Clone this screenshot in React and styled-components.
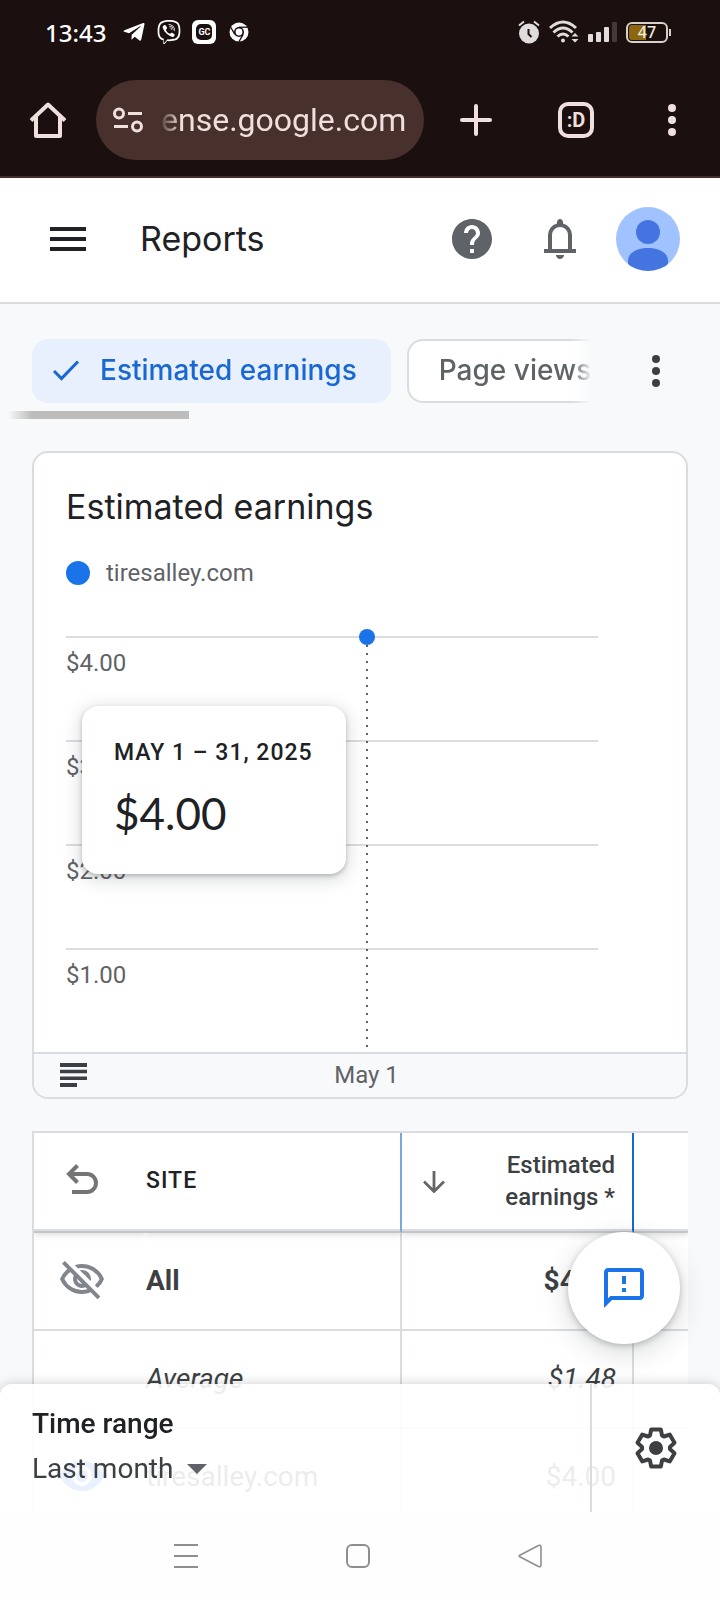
import React from 'react'
import styled, { createGlobalStyle } from 'styled-components'
import { FaTelegramPlane, FaViber } from 'react-icons/fa'
import {
    MdHelp,
    MdMenu,
    MdOutlineFeedback,
    MdOutlineVisibilityOff,
    MdVisibility,
} from 'react-icons/md'

const gridLabels = ['$4.00', '$3.00', '$2.00', '$1.00']

const GlobalStyle = createGlobalStyle`
  * {
    box-sizing: border-box;
  }
  body {
    margin: 0;
    background: #f8f9fb;
    color: #3c4043;
    font-family: Roboto, "Liberation Sans", sans-serif;
  }
  button, input, select {
    font: inherit;
    color: inherit;
    background: none;
    border: 0;
    padding: 0;
    margin: 0;
  }
  h1, h2, p {
    margin: 0;
    font-weight: 400;
  }
  svg {
    display: block;
    flex: none;
  }
`

/* ---------- phone status bar ---------- */

const ChromeMark = () => (
    <svg width="20" height="20" viewBox="0 0 20 20">
        <circle cx="10" cy="10" r="9.5" fill="#fff" />
        <circle cx="10" cy="10" r="5" fill="#1b100f" />
        <circle cx="10" cy="10" r="3.4" fill="#fff" />
        {[0, 120, 240].map((a) => (
            <path key={a} d="M10 5.2H18.6" stroke="#1b100f" strokeWidth="1.3" transform={`rotate(${a} 10 10)`} />
        ))}
    </svg>
)

const Alarm = () => (
    <svg width="22" height="24" viewBox="0 0 22 24">
        <circle cx="11" cy="13.5" r="10" fill="#e0dcdc" />
        <path d="M1 5.5 6 1.5M21 5.5 16 1.5" stroke="#e0dcdc" strokeWidth="2" />
        <path d="M10.5 9v5l3 3" stroke="#1b100f" strokeWidth="2" fill="none" />
    </svg>
)

const Wifi = () => (
    <svg width="30" height="24" viewBox="0 0 30 24" fill="none" stroke="#e0dcdc" strokeWidth="3">
        <path d="M1 8Q14 -4 27 8" />
        <path d="M4.5 12.5Q14 3.5 23.5 12.5" />
        <path d="M8.5 16.5Q14 11.5 19.5 16.5" />
        <circle cx="14" cy="20.5" r="2" fill="#e0dcdc" stroke="none" />
        <path d="M22.5 16.5 26 13l3.500 3.500zM22.500 19 26 22.500 29.500 19z" fill="#e0dcdc" stroke="none" />
    </svg>
)

const Signal = () => (
    <svg width="29" height="20" viewBox="0 0 29 20" fill="#e0dcdc">
        <rect x="0" y="12" width="5" height="8" rx="1" />
        <rect x="8" y="10" width="5" height="10" rx="1" />
        <rect x="16" y="5" width="5" height="15" rx="1" />
        <rect x="24" y="0" width="5" height="20" rx="1" fill="#45393a" />
    </svg>
)

const StatusBar = () => (
    <StatusRow>
        <Clock>13:43</Clock>
        <AppIcons>
            <FaTelegramPlane size={24} />
            <FaViber size={24} />
            <GcBadge><span>GC</span></GcBadge>
            <ChromeMark />
        </AppIcons>
        <SystemIcons>
            <Alarm />
            <Wifi />
            <Signal />
            <Battery><span>47</span></Battery>
        </SystemIcons>
    </StatusRow>
)

const StatusRow = styled.div`
  display: flex;
  align-items: center;
  height: 64px;
  padding: 0 52px 0 45px;
  color: #fff;
`

const Clock = styled.time`
  font-family: "Noto Sans", sans-serif;
  font-size: 24px;
  font-weight: 500;
`

const AppIcons = styled.div`
  display: flex;
  align-items: center;
  gap: 11px;
  margin-left: 16px;
  svg:last-child {
    margin-left: 2px;
  }
`

const GcBadge = styled.div`
  width: 24px;
  height: 24px;
  padding: 4px;
  border-radius: 6px;
  background: #fff;
  span {
    display: grid;
    place-items: center;
    height: 16px;
    border-radius: 5px;
    background: #1b100f;
    font-size: 9px;
    font-weight: 700;
  }
`

const SystemIcons = styled.div`
  display: flex;
  align-items: center;
  gap: 9px;
  margin-left: auto;
`

const Battery = styled.div`
  position: relative;
  width: 42px;
  height: 21px;
  border: 2px solid #d8d2c8;
  border-radius: 6px;
  background: linear-gradient(90deg, #8d670f 48%, transparent 48%) content-box;
  padding: 1px;
  span {
    display: block;
    text-align: center;
    font-family: "Noto Sans", sans-serif;
    font-size: 16px;
    line-height: 15px;
    font-weight: 500;
    color: #efe8dc;
  }
  &::after {
    content: '';
    position: absolute;
    right: -5px;
    top: 5px;
    width: 2px;
    height: 7px;
    background: #d8d2c8;
  }
`

/* ---------- browser toolbar ---------- */

const Kebab = () => (
    <svg width="8" height="32" viewBox="0 0 8 32" fill="currentColor">
        <circle cx="4" cy="4" r="4" />
        <circle cx="4" cy="16" r="4" />
        <circle cx="4" cy="28" r="4" />
    </svg>
)

const BrowserBar = () => (
    <Browser>
        <StatusBar />
        <Toolbar>
            <ToolButton aria-label="Home">
                <svg width="40" height="40" viewBox="0 0 40 40" fill="none" stroke="currentColor" strokeWidth="4" strokeLinejoin="round">
                    <path d="M3 20.500 20 4.500 37 20.500M8 17V36H32V17" />
                </svg>
            </ToolButton>
            <AddressPill>
                <svg width="32" height="28" viewBox="0 0 32 28" fill="none" stroke="currentColor" strokeWidth="3">
                    <circle cx="7" cy="7.500" r="4.500" />
                    <path d="M16 7.500H30M2 20.500H16" />
                    <circle cx="25" cy="20.500" r="4.500" />
                </svg>
                <input type="text" aria-label="Address" defaultValue="ense.google.com" />
            </AddressPill>
            <ToolButton aria-label="New tab" $wide>
                <svg width="32" height="32" viewBox="0 0 32 32" stroke="currentColor" strokeWidth="4" strokeLinecap="round">
                    <path d="M2 16H30M16 2V30" />
                </svg>
            </ToolButton>
            <ToolButton aria-label="Tabs">
                <TabCount>:D</TabCount>
            </ToolButton>
            <ToolButton aria-label="Browser menu">
                <Kebab />
            </ToolButton>
        </Toolbar>
    </Browser>
)

const Browser = styled.div`
  background: #1b100f;
  border-bottom: 2px solid #412e2c;
`

const Toolbar = styled.div`
  display: flex;
  align-items: center;
  height: 112px;
  color: #f0dfdc;
`

const ToolButton = styled.button`
  display: grid;
  place-items: center;
  flex: none;
  width: ${(props) => (props.$wide ? '104px' : '96px')};
  height: 80px;
`

const AddressPill = styled.div`
  display: flex;
  align-items: center;
  flex: 1;
  min-width: 0;
  height: 80px;
  padding: 0 16px;
  gap: 17px;
  border-radius: 40px;
  background: #48302d;
  input {
    flex: 1;
    min-width: 0;
    font-size: 32px;
    mask-image: linear-gradient(90deg, rgba(0, 0, 0, 0.1), #000 20px);
  }
`

const TabCount = styled.span`
  display: grid;
  place-items: center;
  width: 36px;
  height: 36px;
  border: 4px solid currentColor;
  border-radius: 10px;
  font-size: 20px;
  line-height: 20px;
  font-weight: 700;
`

/* ---------- page header ---------- */

const PageHeader = () => (
    <Header>
        <IconButton aria-label="Main menu" $dark><MdMenu size={48} /></IconButton>
        <h1>Reports</h1>
        <HeaderActions>
            <IconButton aria-label="Help"><MdHelp size={48} /></IconButton>
            <IconButton aria-label="Notifications">
                <svg width="48" height="48" viewBox="0 0 24 24" fill="currentColor">
                    <path d="M4 19v-2h2v-7q0-2.075 1.250-3.687T10.500 4.200v-.7q0-.625.438-1.062T12 2t1.063.438T13.500 3.500v.7q2 .5 3.250 2.113T18 10v7h2v2zm8 3q-.825 0-1.412-.587T10 20h4q0 .825-.587 1.413T12 22m-4-5h8v-7q0-1.650-1.175-2.825T12 6 9.175 7.175 8 10z" />
                </svg>
            </IconButton>
            <IconButton aria-label="Account">
                <svg width="64" height="64" viewBox="0 0 64 64">
                    <clipPath id="avatar"><circle cx="32" cy="32" r="32" /></clipPath>
                    <g clipPath="url(#avatar)">
                        <rect width="64" height="64" fill="#a0c2ff" />
                        <circle cx="32" cy="25" r="12" fill="#4374e0" />
                        <path d="M12 64V54C12 45 22 41 32 41S52 45 52 54V64z" fill="#4374e0" />
                    </g>
                </svg>
            </IconButton>
        </HeaderActions>
    </Header>
)

const Header = styled.header`
  display: flex;
  align-items: center;
  height: 126px;
  padding: 0 40px 2px 44px;
  background: #fff;
  border-bottom: 2px solid #dadce0;
  h1 {
    margin-left: 48px;
    font-family: Inter, sans-serif;
    font-size: 34px;
    line-height: 44px;
    color: #202124;
  }
`

const HeaderActions = styled.div`
  display: flex;
  align-items: center;
  gap: 40px;
  margin-left: auto;
  button:last-child {
    margin-left: -8px;
  }
`

const IconButton = styled.button`
  display: grid;
  place-items: center;
  color: ${(props) => (props.$dark ? '#202124' : '#5f6368')};
`

/* ---------- metric chips ---------- */

const MetricChips = () => (
    <ChipBar>
        <ChipScroller>
            <Chips>
                <Chip $selected aria-pressed="true">
                    <svg width="28" height="24" viewBox="0 0 28 24" fill="none" stroke="currentColor" strokeWidth="3">
                        <path d="M2 13 9.500 20.500 26 3.500" />
                    </svg>
                    Estimated earnings
                </Chip>
                <Chip aria-pressed="false">Page views</Chip>
            </Chips>
            <ScrollThumb />
        </ChipScroller>
        <ChipMenu aria-label="More metrics"><Kebab /></ChipMenu>
    </ChipBar>
)

const ChipBar = styled.div`
  display: flex;
  align-items: flex-start;
  padding: 35px 0 32px 8px;
`

const ChipScroller = styled.div`
  flex: 1;
  min-width: 0;
  overflow: hidden;
  mask-image: linear-gradient(90deg, transparent, #000 24px, #000 calc(100% - 20px), transparent);
`

const Chips = styled.div`
  display: flex;
  gap: 16px;
  padding-left: 24px;
`

const Chip = styled.button`
  display: flex;
  align-items: center;
  flex: none;
  gap: 20px;
  height: 64px;
  padding: ${(props) => (props.$selected ? '0 32px 2px 18px' : '0 30px 2px')};
  border: 2px solid ${(props) => (props.$selected ? '#e8f0fe' : '#dadce0')};
  border-radius: 16px;
  background: ${(props) => (props.$selected ? '#e8f0fe' : '#fff')};
  color: ${(props) => (props.$selected ? '#1967d2' : '#5f6368')};
  font-family: Inter, sans-serif;
  font-size: 28px;
  font-weight: 500;
`

const ScrollThumb = styled.div`
  width: 181px;
  height: 8px;
  margin-top: 8px;
  background: #bcbcbc;
`

const ChipMenu = styled.button`
  display: grid;
  place-items: center;
  width: 128px;
  height: 64px;
  color: #3c4043;
`

/* ---------- chart card ---------- */

const EarningsChart = () => (
    <Card>
        <CardTitle>Estimated earnings</CardTitle>
        <Legend>
            <svg width="24" height="24" viewBox="0 0 24 24"><circle cx="12" cy="12" r="12" fill="#1a73e8" /></svg>
            tiresalley.com
        </Legend>
        <Plot>
            {gridLabels.map((label) => <GridRow key={label}>{label}</GridRow>)}
            <Guide>
                <svg width="16" height="420" viewBox="0 0 16 420">
                    <path d="M8 16V418" stroke="#5f6368" strokeWidth="2" strokeDasharray="2 6" />
                    <circle cx="8" cy="8" r="8" fill="#1a73e8" />
                </svg>
            </Guide>
            <Tooltip role="status">
                <p>MAY 1 – 31, 2025</p>
                <strong>$4.00</strong>
            </Tooltip>
        </Plot>
        <Axis>
            <button aria-label="Annotations">
                <svg width="28" height="24" viewBox="0 0 28 24" fill="#3c4043">
                    <path d="M0 0H27V4H0zM0 6.700H27V10.200H0zM0 13.500H27V17H0zM0 20H17V24H0z" />
                </svg>
            </button>
            <span>May 1</span>
        </Axis>
    </Card>
)

const Card = styled.section`
  margin: 0 32px 32px;
  border: 2px solid #dadce0;
  border-radius: 16px;
  background: #fff;
`

const CardTitle = styled.h2`
  padding: 32px 32px 0;
  font-family: Inter, sans-serif;
  font-size: 34px;
  line-height: 44px;
  color: #202124;
`

const Legend = styled.div`
  display: flex;
  align-items: center;
  gap: 16px;
  margin: 28px 32px 47px;
  font-size: 24px;
  line-height: 32px;
  color: #5f6368;
`

const Plot = styled.div`
  position: relative;
  padding: 0 88px 0 32px;
`

const GridRow = styled.div`
  height: 104px;
  padding-top: 9px;
  border-top: 2px solid #dadce0;
  font-size: 24px;
  line-height: 32px;
  color: #5f6368;
`

const Guide = styled.div`
  position: absolute;
  top: -7px;
  left: 51%;
  margin-left: -8px;
`

const Tooltip = styled.div`
  position: absolute;
  top: 70px;
  left: 48px;
  min-width: 264px;
  padding: 33px 32px 35px;
  border-radius: 16px;
  background: #fff;
  box-shadow: 0 2px 4px rgba(60, 64, 67, 0.3), 0 4px 16px 4px rgba(60, 64, 67, 0.15);
  color: #202124;
  p {
    font-size: 23px;
    line-height: 28px;
    font-weight: 500;
    letter-spacing: 1px;
    white-space: nowrap;
  }
  strong {
    display: block;
    margin-top: 20px;
    font-family: Lato, sans-serif;
    font-size: 44px;
    line-height: 52px;
    font-weight: 400;
  }
`

const Axis = styled.div`
  display: grid;
  grid-template-columns: 26% 50% 1fr;
  align-items: center;
  height: 45px;
  padding-bottom: 2px;
  border-top: 2px solid #dadce0;
  border-radius: 0 0 14px 14px;
  background: #f8f9fb;
  font-size: 24px;
  color: #5f6368;
  button {
    justify-self: start;
    margin-left: 26px;
  }
  span {
    text-align: center;
  }
`

/* ---------- table ---------- */

const ReportTable = () => (
    <TableWrap>
        <Table>
            <colgroup>
                <col className="icon" />
                <col className="site" />
                <col className="value" />
                <col />
            </colgroup>
            <thead>
                <tr>
                    <th>
                        <button aria-label="Undo">
                            <svg width="48" height="48" viewBox="0 0 48 48" fill="none" stroke="#757575" strokeWidth="4">
                                <path d="M19.500 10.500 11 19 19.500 27.500M11 19H29A9 9 0 0 1 29 37H14" />
                            </svg>
                        </button>
                    </th>
                    <SiteHead scope="col">SITE</SiteHead>
                    <ValueHead scope="col">
                        <button>
                            <svg width="24" height="24" viewBox="0 0 24 24" fill="none" stroke="#666" strokeWidth="2.800">
                                <path d="M12 2V22M2 12.500 12 22.500 22 12.500" />
                            </svg>
                            <span>Estimated earnings *</span>
                        </button>
                    </ValueHead>
                    <th />
                </tr>
            </thead>
            <tbody>
                <Row $bold>
                    <td><MdOutlineVisibilityOff size={48} color="#80868b" /></td>
                    <SiteCell>All</SiteCell>
                    <ValueCell>$4.00</ValueCell>
                    <td />
                </Row>
                <Row $italic>
                    <td />
                    <SiteCell>Average</SiteCell>
                    <ValueCell>$1.48</ValueCell>
                    <td />
                </Row>
                <Row>
                    <td><MdVisibility size={48} color="#1a73e8" /></td>
                    <SiteCell>tiresalley.com</SiteCell>
                    <ValueCell>$4.00</ValueCell>
                    <td />
                </Row>
            </tbody>
        </Table>
    </TableWrap>
)

const TableWrap = styled.div`
  margin: 0 32px;
  border: 2px solid #dadce0;
  border-width: 2px 0 0 2px;
  background: #fff;
`

const Table = styled.table`
  width: 100%;
  table-layout: fixed;
  border-collapse: separate;
  border-spacing: 0;
  .icon {
    width: 112px;
  }
  .site {
    width: 256px;
  }
  .value {
    width: 232px;
  }
  th, td {
    height: 98px;
    padding: 0 0 2px;
    border-bottom: 2px solid #dadce0;
    text-align: left;
  }
  th {
    height: 100px;
    padding-bottom: 2px;
    border-bottom-color: #c4c5c9;
    box-shadow: inset 0 -2px 0 #dadce0, 0 2px 6px rgba(0, 0, 0, 0.14);
    clip-path: inset(0 0 -8px 0);
  }
  td > svg, th > button > svg:only-child {
    margin-left: 24px;
  }
`

const SiteHead = styled.th`
  && {
    padding-bottom: 4px;
  }
  border-right: 2px solid #7aa7e0;
  font-size: 23px;
  font-weight: 500;
  letter-spacing: 1px;
  color: #202124;
`

const ValueHead = styled.th`
  border-right: 2px solid #1967d2;
  button {
    display: flex;
    align-items: center;
    justify-content: space-between;
    width: 100%;
    padding: 0 17px 0 20px;
  }
  span {
    width: 130px;
    text-align: right;
    font-size: 24px;
    line-height: 32px;
    font-weight: 500;
  }
`

const Row = styled.tr`
  font-size: 28px;
  font-weight: ${(props) => (props.$bold ? 700 : 400)};
  font-style: ${(props) => (props.$italic ? 'italic' : 'normal')};
`

const SiteCell = styled.td`
  border-right: 2px solid #dadce0;
`

const ValueCell = styled.td`
  && {
    padding-right: 16px;
    border-right: 2px solid #dadce0;
    text-align: right;
  }
`

/* ---------- floating parts ---------- */

const gearTooth = [[-6, -12.6], [-4.8, -18.6], [4.8, -18.6], [6, -12.6]]
const gearPoints = [0, 60, 120, 180, 240, 300]
    .flatMap((deg) => {
        const a = (deg * Math.PI) / 180
        return gearTooth.map(([x, y]) => [
            24 + x * Math.cos(a) - y * Math.sin(a),
            24 + x * Math.sin(a) + y * Math.cos(a),
        ].join(','))
    })
    .join(' ')

const BottomBar = () => (
    <Bottom>
        <RangeSheet>
            <RangePicker>
                <label htmlFor="range">Time range</label>
                <div>
                    <select id="range" defaultValue="last">
                        <option value="last">Last month</option>
                    </select>
                    <svg width="20" height="10" viewBox="0 0 20 10" fill="#5f6368"><path d="M0 0H20L10 10z" /></svg>
                </div>
            </RangePicker>
            <SettingsButton aria-label="Report settings">
                <svg width="48" height="48" viewBox="0 0 48 48">
                    <polygon points={gearPoints} fill="none" stroke="#3c4043" strokeWidth="4" strokeLinejoin="round" />
                    <circle cx="24" cy="24" r="7" fill="#3c4043" />
                </svg>
            </SettingsButton>
        </RangeSheet>
        <SystemNav>
            <button aria-label="Recent apps">
                <svg width="24" height="26" viewBox="0 0 24 26" stroke="#8e8e8e" strokeWidth="2">
                    <path d="M0 2H24M0 13H24M0 24H24" />
                </svg>
            </button>
            <button aria-label="Home screen">
                <svg width="24" height="24" viewBox="0 0 24 24" fill="none" stroke="#8e8e8e" strokeWidth="2">
                    <rect x="1" y="1" width="22" height="22" rx="5" />
                </svg>
            </button>
            <button aria-label="Back">
                <svg width="24" height="24" viewBox="0 0 24 24" fill="none" stroke="#8e8e8e" strokeWidth="1.600" strokeLinejoin="round">
                    <path d="M1.800 11.200Q.5 12 1.800 12.800L20.500 22.500Q23 23.300 23 21V3Q23 .7 20.500 1.500z" />
                </svg>
            </button>
        </SystemNav>
    </Bottom>
)

const Bottom = styled.footer`
  position: fixed;
  inset: auto 0 0;
`

const RangeSheet = styled.div`
  display: flex;
  height: 128px;
  border-radius: 12px 12px 0 0;
  background: rgba(255, 255, 255, 0.9);
  box-shadow: 0 0 12px rgba(60, 64, 67, 0.25);
  clip-path: inset(-16px 0 0 0);
`

const RangePicker = styled.div`
  flex: 1;
  padding: 22px 32px;
  font-size: 28px;
  line-height: 36px;
  label {
    font-weight: 500;
    color: #202124;
  }
  div {
    display: flex;
    align-items: center;
    gap: 13px;
    margin-top: 9px;
  }
  select {
    appearance: none;
    height: 36px;
    line-height: 36px;
  }
`

const SettingsButton = styled.button`
  display: grid;
  place-items: center;
  width: 130px;
  border-left: 2px solid #dadce0;
`

const SystemNav = styled.nav`
  display: flex;
  align-items: center;
  justify-content: center;
  gap: 148px;
  height: 88px;
  padding-right: 4px;
  background: #fefefe;
`

const FeedbackButton = styled.button`
  position: fixed;
  right: 40px;
  bottom: 256px;
  display: grid;
  place-items: center;
  width: 112px;
  height: 112px;
  border-radius: 50%;
  background: #fff;
  color: #1a73e8;
  box-shadow: 0 2px 6px rgba(60, 64, 67, 0.3), 0 8px 24px 4px rgba(60, 64, 67, 0.15);
`

const Page = styled.div`
  min-height: 100vh;
`

const App = () => {
    return <Page>
        <GlobalStyle />
        <BrowserBar />
        <PageHeader />
        <main>
            <MetricChips />
            <EarningsChart />
            <ReportTable />
        </main>
        <FeedbackButton aria-label="Send feedback"><MdOutlineFeedback size={48} /></FeedbackButton>
        <BottomBar />
    </Page>
}

export default App
